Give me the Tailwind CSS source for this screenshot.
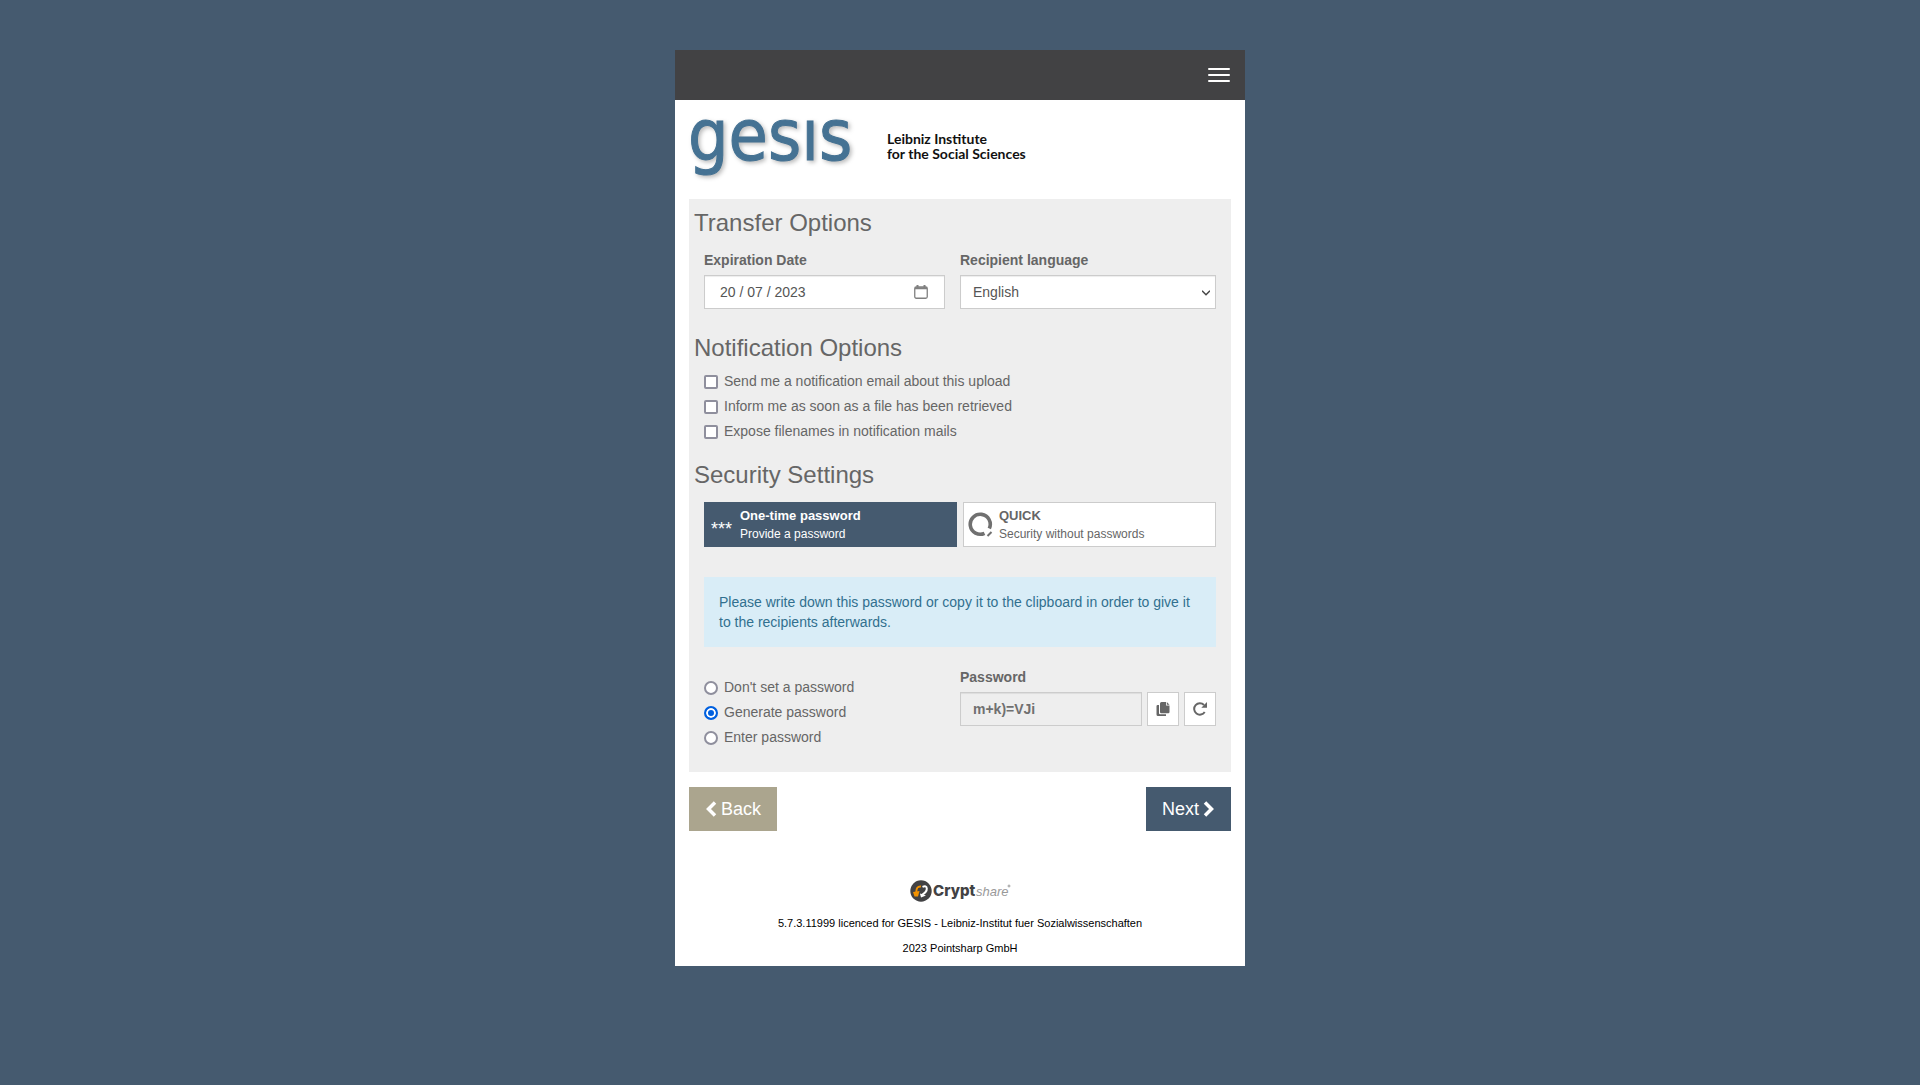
<!DOCTYPE html>
<html lang="en">
<head>
<meta charset="utf-8">
<meta name="viewport" content="width=device-width, initial-scale=1">
<title>Transfer Options</title>
<script src="https://cdn.jsdelivr.net/npm/@tailwindcss/browser@4"></script>
</head>
<body class="min-h-screen bg-[#455a6f] font-['Liberation_Sans',Arial,sans-serif] text-sm leading-5 text-[#666]">
<div class="mx-auto mt-[50px] w-full max-w-[570px] bg-white">
  <header class="flex h-[50px] items-center justify-end bg-[#424244] px-[15px]">
    <button type="button" aria-label="Menu" class="flex w-[22px] flex-col gap-1">
      <span class="h-0.5 w-full rounded-[1px] bg-white"></span>
      <span class="h-0.5 w-full rounded-[1px] bg-white"></span>
      <span class="h-0.5 w-full rounded-[1px] bg-white"></span>
    </button>
  </header>

  <div class="px-3.5">
    <div class="h-[99px] pt-3.5">
      <svg class="h-[75px] w-[360px] overflow-visible" viewBox="0 0 360 75" role="img" aria-label="gesis Leibniz Institute for the Social Sciences">
        <text x="-1" y="46" font-size="71" fill="#457293" stroke="#457293" stroke-width="1" class="font-['DejaVu_Sans_Condensed','Noto_Sans',sans-serif] drop-shadow-[2px_2px_2px_#0004]">gesıs</text>
        <text x="198" y="30" font-size="14" fill="#111" class="font-['Lato',sans-serif] font-bold">Leibniz Institute</text>
        <text x="198" y="45" font-size="14" fill="#111" class="font-['Lato',sans-serif] font-bold">for the Social Sciences</text>
      </svg>
    </div>

    <main class="bg-[#eee] px-[15px] pt-[11px] pb-[25px]">
      <h2 class="-ml-2.5 text-2xl leading-[26px]">Transfer Options</h2>
      <div class="mt-3.5 grid grid-cols-2">
        <div class="pr-[15px]">
          <label for="exp" class="block font-bold">Expiration Date</label>
          <div class="mt-[5px] flex h-[34px] items-center border border-[#ccc] bg-white pr-4 pl-[15px] shadow-[inset_0_1px_1px_#00000013]">
            <input id="exp" type="text" value="20 / 07 / 2023" class="w-full min-w-0 bg-transparent text-[#555] outline-none">
            <svg class="h-3.5 w-3.5 shrink-0" viewBox="0 0 14 14" fill="none" stroke="#808080"><rect x=".75" y="2" width="12.5" height="11.25" rx="1.5" stroke-width="1.3"/><path d="M1 3.2h12M3.5 0v3M10.500 0v3" stroke-width="2"/></svg>
          </div>
        </div>
        <div>
          <label for="lang" class="block font-bold">Recipient language</label>
          <div class="relative mt-[5px]">
            <select id="lang" class="block h-[34px] w-full appearance-none border border-[#ccc] bg-white px-3 text-[#555] shadow-[inset_0_1px_1px_#00000013]"><option>English</option></select>
            <svg class="pointer-events-none absolute top-3.5 right-1.5 h-2 w-2" viewBox="0 0 8 8" fill="none" stroke="#444" stroke-width="1.5"><path d="M0 1.800 4 5.800 8 1.800"/></svg>
          </div>
        </div>
      </div>

      <h2 class="-ml-2.5 mt-[26px] text-2xl leading-[26px]">Notification Options</h2>
      <div class="mt-2.5 flex flex-col gap-[5px]">
        <label class="flex items-center gap-1.5"><input type="checkbox" class="mt-0.5 h-3.5 w-3.5 appearance-none rounded-[2px] border-2 border-[#8f8f9d] bg-white checked:bg-[#0060df]">Send me a notification email about this upload</label>
        <label class="flex items-center gap-1.5"><input type="checkbox" class="mt-0.5 h-3.5 w-3.5 appearance-none rounded-[2px] border-2 border-[#8f8f9d] bg-white checked:bg-[#0060df]">Inform me as soon as a file has been retrieved</label>
        <label class="flex items-center gap-1.5"><input type="checkbox" class="mt-0.5 h-3.5 w-3.5 appearance-none rounded-[2px] border-2 border-[#8f8f9d] bg-white checked:bg-[#0060df]">Expose filenames in notification mails</label>
      </div>

      <h2 class="-ml-2.5 mt-[21px] text-2xl leading-[26px]">Security Settings</h2>
      <div class="mt-3.5 grid grid-cols-2 gap-1.5">
        <button type="button" class="flex h-[45px] items-center gap-[7px] border border-[#455a6f] bg-[#455a6f] px-1.5 text-left text-white">
          <span class="w-[22px] pt-2 text-lg leading-5">***</span>
          <span class="flex flex-col"><span class="text-[13px] leading-[18px] font-bold">One-time password</span><span class="text-xs leading-[18px]">Provide a password</span></span>
        </button>
        <button type="button" class="flex h-[45px] items-center gap-1.5 border border-[#ccc] bg-white px-1 text-left">
          <svg class="h-[25px] w-[25px]" viewBox="0 0 25 25" fill="none" stroke="#707070"><path d="M16.500 21.300A10 10 0 1 1 21.300 16.500" stroke-width="3.600"/><path d="M19.500 24l4-4" stroke-width="2"/></svg>
          <span class="flex flex-col"><span class="text-[13px] leading-[18px] font-bold">QUICK</span><span class="text-xs leading-[18px]">Security without passwords</span></span>
        </button>
      </div>

      <p class="mt-[30px] bg-[#d9edf7] p-[15px] text-[#31708f]">Please write down this password or copy it to the clipboard in order to give it to the recipients afterwards.</p>

      <div class="mt-5 grid grid-cols-2">
        <div class="flex flex-col gap-[5px] pt-2.5">
          <label class="flex items-center gap-1.5"><input type="radio" name="pw" class="mt-0.5 h-3.5 w-3.5 appearance-none rounded-full border-2 border-[#8f8f9d] bg-white checked:border-[#0060df] checked:bg-[#0060df] checked:shadow-[inset_0_0_0_2px_#fff]">Don't set a password</label>
          <label class="flex items-center gap-1.5"><input type="radio" name="pw" checked class="mt-0.5 h-3.5 w-3.5 appearance-none rounded-full border-2 border-[#8f8f9d] bg-white checked:border-[#0060df] checked:bg-[#0060df] checked:shadow-[inset_0_0_0_2px_#fff]">Generate password</label>
          <label class="flex items-center gap-1.5"><input type="radio" name="pw" class="mt-0.5 h-3.5 w-3.5 appearance-none rounded-full border-2 border-[#8f8f9d] bg-white checked:border-[#0060df] checked:bg-[#0060df] checked:shadow-[inset_0_0_0_2px_#fff]">Enter password</label>
        </div>
        <div>
          <label for="pass" class="block font-bold">Password</label>
          <div class="mt-[5px] flex gap-[5px]">
            <input id="pass" type="text" readonly value="m+k)=VJi" class="h-[34px] w-full min-w-0 border border-[#ccc] bg-[#eee] px-3 font-bold text-[#707070] shadow-[inset_0_1px_1px_#00000013]">
            <button type="button" aria-label="Copy password" class="flex h-[34px] w-8 shrink-0 items-center justify-center border border-[#ccc] bg-white"><svg class="h-3.5 w-3.5" viewBox="0 0 14 14" fill="#666"><path d="M4 1.500Q4 0 5.500 0H10v3.500h3.500V10q0 1.200-1.200 1.200H5.200Q4 11.200 4 10ZM10.800 0 13.500 2.700H10.800ZM3 3v8.200q0 1 1 1H10V14H2Q.5 14 .5 12.500V4.200Q.5 3 1.700 3Z"/></svg></button>
            <button type="button" aria-label="Generate new password" class="flex h-[34px] w-8 shrink-0 items-center justify-center border border-[#ccc] bg-white"><svg class="h-3.5 w-3.5" viewBox="0 0 14 14" fill="none" stroke="#666" stroke-width="2"><path d="M11.700 10A5.700 5.700 0 1 1 11 3"/><path d="M14 0v5.700H8.300Z" fill="#666" stroke="none"/></svg></button>
          </div>
        </div>
      </div>
    </main>

    <nav class="mt-[15px] flex justify-between text-lg text-white">
      <button type="button" class="flex h-11 items-center gap-1 bg-[#aba58e] px-4"><svg class="h-4 w-3" viewBox="0 0 12 16" fill="none" stroke="#fff" stroke-width="3.500"><path d="M10 1.500 3.500 8l6.500 6.500"/></svg>Back</button>
      <button type="button" class="flex h-11 items-center gap-1 bg-[#455a6f] px-4"><span>Next</span><svg class="h-4 w-3" viewBox="0 0 12 16" fill="none" stroke="#fff" stroke-width="3.500"><path d="M2 1.500 8.500 8 2 14.500"/></svg></button>
    </nav>
  </div>

  <footer class="flex flex-col items-center pt-12 pb-2 text-[11px] text-black">
    <a href="#" aria-label="Cryptshare" class="block">
      <svg class="h-6 w-[102px]" viewBox="0 0 102 24">
        <circle cx="12" cy="12" r="10.700" fill="#424244"/>
        <path d="M12 7.500Q7 7 7.300 13.500" fill="none" stroke="#f39200" stroke-width="2"/>
        <path d="M4 13 10.500 12 9 17.500H5.500Z" fill="#f39200"/>
        <path d="M13.500 7.800Q17.500 6 17.800 9.500T12 16.500" fill="none" stroke="#fff" stroke-width="2"/>
        <path d="M11 14.500 17 16.500 12 18.500Z" fill="#fff"/>
        <text x="24" y="17" font-size="15" fill="#424244" class="font-['Inter',sans-serif] font-extrabold">Crypt</text>
        <text x="67" y="17" font-size="13" fill="#999" class="font-['Liberation_Sans',sans-serif] italic">share</text>
        <circle cx="100" cy="7" r="1" fill="none" stroke="#888" stroke-width=".8"/>
      </svg>
    </a>
    <p class="mt-2.5">5.7.3.11999 licenced for GESIS - Leibniz-Institut fuer Sozialwissenschaften</p>
    <p class="mt-[5px]">2023 Pointsharp GmbH</p>
  </footer>
</div>
</body>
</html>
